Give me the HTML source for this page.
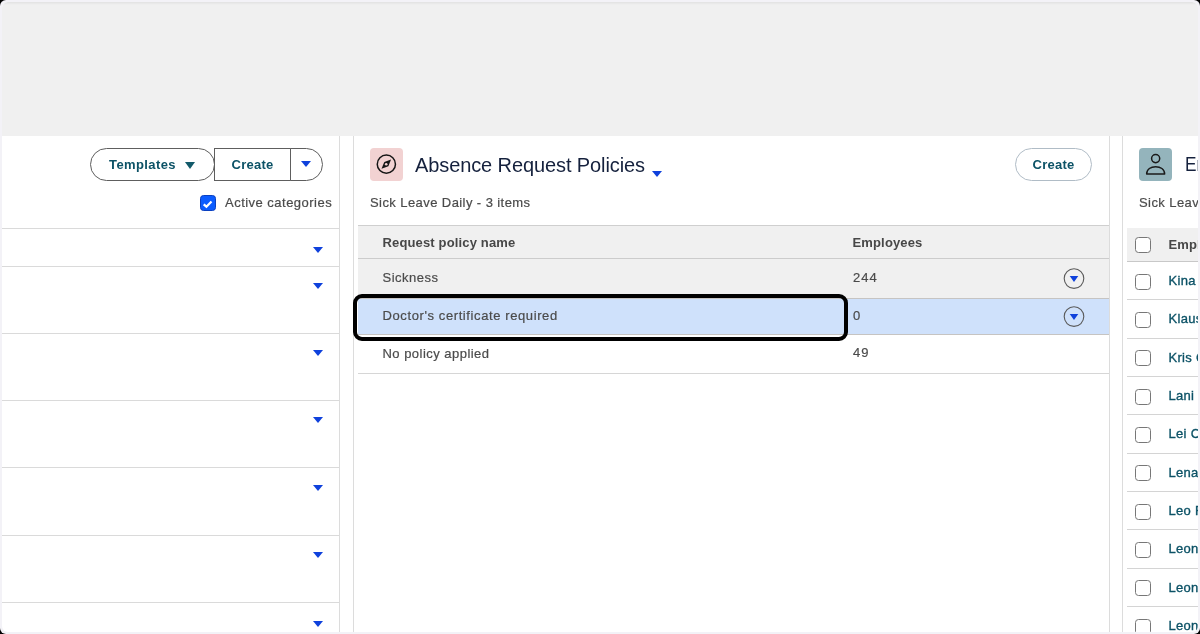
<!DOCTYPE html>
<html><head><meta charset="utf-8">
<style>
*{margin:0;padding:0;box-sizing:border-box}
html,body{width:1200px;height:634px;overflow:hidden;background:#000}
body{font-family:"Liberation Sans",sans-serif;position:relative}
.abs{position:absolute}
#frame{position:absolute;left:0;top:0;width:1200px;height:634px;background:#f3f2f7;border-radius:6px}
#content{will-change:transform;position:absolute;left:2px;top:2px;width:1196px;height:630px;background:#fff;border-radius:6px;overflow:hidden}
#topband{position:absolute;left:0;top:0;width:1196px;height:134px;background:#f0f0f0;box-shadow:inset 0 3px 3px -2px rgba(0,0,0,0.08)}
.vline{position:absolute;top:134px;width:1px;height:500px;background:#dcdcdc}
.hline{position:absolute;height:1px;background:#dadada}
.tri{position:absolute;width:0;height:0;border-left:5px solid transparent;border-right:5px solid transparent;border-top:6px solid #0f41dc}
.t{position:absolute;white-space:nowrap;line-height:1}
.g{color:#4b4b4b;font-size:13px;-webkit-text-stroke:0.2px #4b4b4b}
.g.b{color:#474747!important;-webkit-text-stroke:0}
.b{font-weight:bold}
.teal{color:#0c5266}
.nm{-webkit-text-stroke:0.35px #0c5266;letter-spacing:0.3px}
</style></head><body>
<div id="frame"></div>
<div id="content">
  <div id="topband"></div>
  <!-- coordinates inside content are offset by -2 -->
  <div class="vline" style="left:337px"></div>
  <div class="vline" style="left:351px"></div>
  <div class="vline" style="left:1107px"></div>
  <div class="vline" style="left:1120px"></div>

  <!-- LEFT PANEL -->
  <div class="abs" style="left:88px;top:146px;width:125px;height:33px;border:1px solid #5e5e5e;border-radius:17px;background:#fff"></div>
  <div class="t b teal" style="left:107px;top:156px;font-size:13px;letter-spacing:0.4px">Templates</div>
  <div class="tri" style="left:183px;top:160px;border-top-color:#125a6a;border-left-width:5.5px;border-right-width:5.5px;border-top-width:7px"></div>
  <div class="abs" style="left:212px;top:146px;width:78px;height:33px;border:1px solid #5e5e5e;background:#fff"></div>
  <div class="t b teal" style="left:229.5px;top:156px;font-size:13px;letter-spacing:0.25px">Create</div>
  <div class="abs" style="left:288px;top:146px;width:33px;height:33px;border:1px solid #5e5e5e;border-left:1px solid #5e5e5e;border-radius:0 17px 17px 0;background:#fff"></div>
  <div class="tri" style="left:299px;top:158.8px;border-left-width:5.5px;border-right-width:5.5px;border-top-width:6.5px"></div>

  <div class="abs" style="left:198px;top:193px;width:16px;height:16px;background:#0b5cff;border:1px solid #0a40c0;border-radius:3.5px"></div>
  <svg class="abs" style="left:198px;top:193px" width="16" height="16" viewBox="0 0 16 16"><path d="M3.7 9.4 L6.4 11.7 L11.5 6.4" fill="none" stroke="#fff" stroke-width="2.2" stroke-linecap="butt" stroke-linejoin="miter"/></svg>
  <div class="t g" style="left:223px;top:194px;letter-spacing:0.48px">Active categories</div>

  <div class="hline" style="left:0;top:226px;width:337px"></div>
  <div class="hline" style="left:0;top:263.5px;width:337px"></div>
  <div class="hline" style="left:0;top:331px;width:337px"></div>
  <div class="hline" style="left:0;top:398px;width:337px"></div>
  <div class="hline" style="left:0;top:465px;width:337px"></div>
  <div class="hline" style="left:0;top:533px;width:337px"></div>
  <div class="hline" style="left:0;top:600px;width:337px"></div>
  <div class="tri" style="left:311px;top:245px"></div>
  <div class="tri" style="left:311px;top:280.5px"></div>
  <div class="tri" style="left:311px;top:348px"></div>
  <div class="tri" style="left:311px;top:415px"></div>
  <div class="tri" style="left:311px;top:482.5px"></div>
  <div class="tri" style="left:311px;top:550px"></div>
  <div class="tri" style="left:311px;top:619px"></div>

  <!-- MIDDLE PANEL -->
  <div class="abs" style="left:368px;top:146px;width:33px;height:33px;background:#f2d2d2;border-radius:4px"></div>
  <svg class="abs" style="left:368px;top:146px" width="33" height="33" viewBox="0 0 33 33">
    <circle cx="16.35" cy="16.15" r="9.1" fill="none" stroke="#161616" stroke-width="1.5"/>
    <path d="M11.5 20.8 L14.3 14.1 L21 11.5 L18.4 18.2 Z" fill="#161616"/>
    <circle cx="16.2" cy="16.2" r="1.3" fill="#f2d2d2"/>
  </svg>
  <div class="t" style="left:413px;top:153px;font-size:20px;color:#15213d;letter-spacing:-0.1px">Absence Request Policies</div>
  <div class="tri" style="left:649.5px;top:168.5px;border-left-width:5.5px;border-right-width:5.5px;border-top-width:6px"></div>

  <div class="abs" style="left:1013px;top:146px;width:77px;height:33px;border:1px solid #b0bcc6;border-radius:17px;background:#fff"></div>
  <div class="t b teal" style="left:1030.5px;top:156px;font-size:13px;letter-spacing:0.25px">Create</div>

  <div class="t g" style="left:368px;top:194px;letter-spacing:0.42px">Sick Leave Daily - 3 items</div>

  <!-- table -->
  <div class="abs" style="left:356px;top:223px;width:751px;height:34px;background:#f0f0f0;border-top:1px solid #cfcfcf;border-bottom:1px solid #cccccc"></div>
  <div class="t g b" style="left:380.5px;top:234px;color:#424242;letter-spacing:0.15px">Request policy name</div>
  <div class="t g b" style="left:850.5px;top:234px;color:#424242;letter-spacing:0.15px">Employees</div>

  <div class="abs" style="left:356px;top:257px;width:751px;height:39px;background:#f0f0f0"></div>
  <div class="abs" style="left:356px;top:295.7px;width:751px;height:1.5px;background:#c6c4c2"></div>
  <div class="abs" style="left:356px;top:297px;width:751px;height:34.5px;background:#cfe1fb"></div>
  <div class="abs" style="left:356px;top:331.5px;width:751px;height:1.5px;background:#c6c4c2"></div>
  <div class="abs" style="left:356px;top:370.5px;width:751px;height:1.5px;background:#d6d6d6"></div>

  <div class="t g" style="left:380.5px;top:269.3px;letter-spacing:0.5px">Sickness</div>
  <div class="t g" style="left:380.5px;top:306.8px;letter-spacing:0.6px">Doctor's certificate required</div>
  <div class="t g" style="left:380.5px;top:344.8px;letter-spacing:0.47px">No policy applied</div>
  <div class="t g" style="left:851px;top:269.3px;letter-spacing:1px">244</div>
  <div class="t g" style="left:851px;top:306.8px;letter-spacing:1px">0</div>
  <div class="t g" style="left:851px;top:344.3px;letter-spacing:1px">49</div>

  <svg class="abs" style="left:1061px;top:266px" width="22" height="22" viewBox="0 0 22 22"><circle cx="11" cy="10.6" r="9.8" fill="none" stroke="#5a5a5a" stroke-width="1.1"/><path d="M6.7 8 L15.3 8 L11 14 Z" fill="#0f41dc"/></svg>
  <svg class="abs" style="left:1061px;top:303.5px" width="22" height="22" viewBox="0 0 22 22"><circle cx="11" cy="10.6" r="9.8" fill="none" stroke="#5a5a5a" stroke-width="1.1"/><path d="M6.7 8 L15.3 8 L11 14 Z" fill="#0f41dc"/></svg>

  <!-- highlight box -->
  <div class="abs" style="left:351px;top:292px;width:495px;height:47px;border:4px solid #000;border-radius:9px"></div>

  <!-- RIGHT PANEL -->
  <div class="abs" style="left:1137px;top:146px;width:33px;height:33px;background:#94b4bc;border-radius:4px"></div>
  <svg class="abs" style="left:1137px;top:146px" width="33" height="33" viewBox="0 0 33 33">
    <circle cx="16.65" cy="10.6" r="4.05" fill="none" stroke="#1a1a1a" stroke-width="1.5"/>
    <path d="M7.65 25.95 C7.65 21.2 11.9 18.65 16.65 18.65 C21.4 18.65 25.65 21.2 25.65 25.95 Z" fill="none" stroke="#1a1a1a" stroke-width="1.5" stroke-linejoin="round"/>
  </svg>
  <div class="t" style="left:1182.5px;top:152px;font-size:20px;color:#15213d;transform:scaleX(0.86);transform-origin:0 0">Employees</div>
  <div class="t g" style="left:1137px;top:194px;letter-spacing:0.42px">Sick Leave Daily</div>

  <div class="abs" style="left:1125px;top:225.5px;width:80px;height:34px;background:#f0f0f0;border-bottom:1px solid #c8c8c8"></div>
  <div class="abs" style="left:1133px;top:235px;width:16px;height:16px;border:1.5px solid #777;border-radius:3.5px;background:#fff"></div>
  <div class="t g b" style="left:1166.5px;top:236px;color:#424242;letter-spacing:0.15px">Employee</div>
  <div class="abs" style="left:1133px;top:271.60px;width:16px;height:16px;border:1.5px solid #777;border-radius:3.5px;background:#fff"></div>
  <div class="t teal nm" style="left:1166.5px;top:271.80px;font-size:13px">Kina</div>
  <div class="hline" style="left:1125px;top:297.35px;width:80px;background:#d4d4d4"></div>
  <div class="abs" style="left:1133px;top:309.95px;width:16px;height:16px;border:1.5px solid #777;border-radius:3.5px;background:#fff"></div>
  <div class="t teal nm" style="left:1166.5px;top:310.15px;font-size:13px">Klaus</div>
  <div class="hline" style="left:1125px;top:335.70px;width:80px;background:#d4d4d4"></div>
  <div class="abs" style="left:1133px;top:348.30px;width:16px;height:16px;border:1.5px solid #777;border-radius:3.5px;background:#fff"></div>
  <div class="t teal nm" style="left:1166.5px;top:348.50px;font-size:13px">Kris C</div>
  <div class="hline" style="left:1125px;top:374.05px;width:80px;background:#d4d4d4"></div>
  <div class="abs" style="left:1133px;top:386.65px;width:16px;height:16px;border:1.5px solid #777;border-radius:3.5px;background:#fff"></div>
  <div class="t teal nm" style="left:1166.5px;top:386.85px;font-size:13px">Lani</div>
  <div class="hline" style="left:1125px;top:412.40px;width:80px;background:#d4d4d4"></div>
  <div class="abs" style="left:1133px;top:425.00px;width:16px;height:16px;border:1.5px solid #777;border-radius:3.5px;background:#fff"></div>
  <div class="t teal nm" style="left:1166.5px;top:425.20px;font-size:13px">Lei C</div>
  <div class="hline" style="left:1125px;top:450.75px;width:80px;background:#d4d4d4"></div>
  <div class="abs" style="left:1133px;top:463.35px;width:16px;height:16px;border:1.5px solid #777;border-radius:3.5px;background:#fff"></div>
  <div class="t teal nm" style="left:1166.5px;top:463.55px;font-size:13px">Lena</div>
  <div class="hline" style="left:1125px;top:489.10px;width:80px;background:#d4d4d4"></div>
  <div class="abs" style="left:1133px;top:501.70px;width:16px;height:16px;border:1.5px solid #777;border-radius:3.5px;background:#fff"></div>
  <div class="t teal nm" style="left:1166.5px;top:501.90px;font-size:13px">Leo F</div>
  <div class="hline" style="left:1125px;top:527.45px;width:80px;background:#d4d4d4"></div>
  <div class="abs" style="left:1133px;top:540.05px;width:16px;height:16px;border:1.5px solid #777;border-radius:3.5px;background:#fff"></div>
  <div class="t teal nm" style="left:1166.5px;top:540.25px;font-size:13px">Leon</div>
  <div class="hline" style="left:1125px;top:565.80px;width:80px;background:#d4d4d4"></div>
  <div class="abs" style="left:1133px;top:578.40px;width:16px;height:16px;border:1.5px solid #777;border-radius:3.5px;background:#fff"></div>
  <div class="t teal nm" style="left:1166.5px;top:578.60px;font-size:13px">Leon</div>
  <div class="hline" style="left:1125px;top:604.15px;width:80px;background:#d4d4d4"></div>
  <div class="abs" style="left:1133px;top:616.75px;width:16px;height:16px;border:1.5px solid #777;border-radius:3.5px;background:#fff"></div>
  <div class="t teal nm" style="left:1166.5px;top:616.95px;font-size:13px">Leon</div>
  <div class="hline" style="left:1125px;top:642.50px;width:80px;background:#d4d4d4"></div>
</div>
</body></html>
